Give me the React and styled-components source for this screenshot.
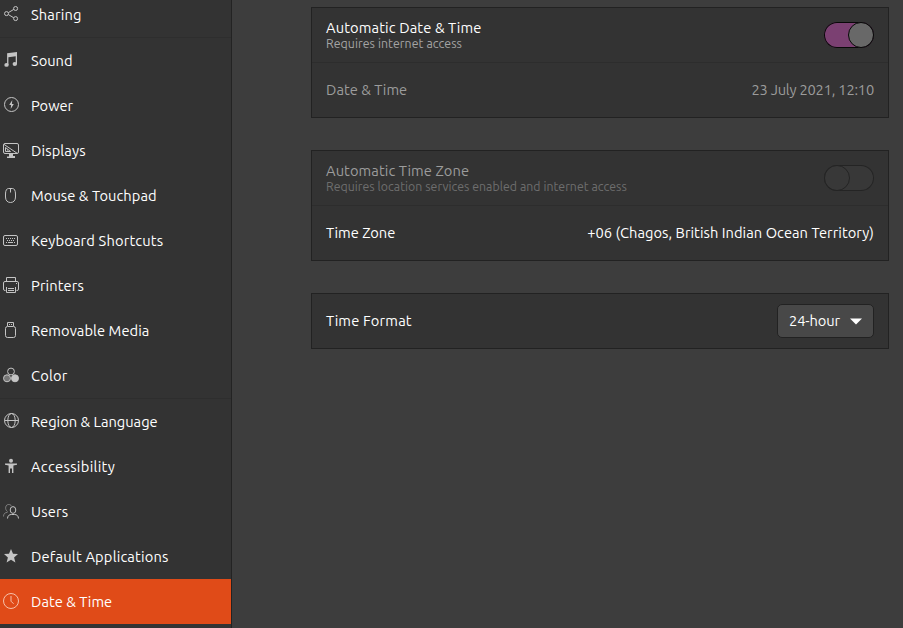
import React from "react";
import styled, { createGlobalStyle } from "styled-components";

const Global = createGlobalStyle`
  * { box-sizing: border-box; }
  body {
    margin: 0;
    background: #3d3d3d;
    overflow: hidden;
    font-family: Ubuntu, "Noto Sans", sans-serif;
    font-size: 14.667px;
    line-height: 16px;
    color: #fff;
  }
`;

const Window = styled.div`
  display: flex;
  width: 903px;
  height: 628px;
  overflow: hidden;
`;

const Sidebar = styled.nav`
  flex: 0 0 232px;
  display: flex;
  flex-direction: column;
  justify-content: flex-start;
  margin-top: -8px;
  background: #333;
  border-right: 1px solid #232323;
`;

const NavGroup = styled.div`
  display: flex;
  flex-direction: column;
  & + & { border-top: 1px solid #2e2e2e; }
`;

const NavItem = styled.div`
  display: flex;
  align-items: center;
  gap: 12px;
  height: 45px;
  padding-left: 3px;
  white-space: nowrap;
  background: ${(p) => (p.$active ? "#e04b18" : "transparent")};
  color: ${(p) => (p.$active ? "#f6c0aa" : "#c4c4c4")};
`;

const NavIcon = styled.svg`
  flex: none;
  width: 16px;
  height: 16px;
  margin-bottom: 1px;
  fill: none;
  stroke: currentColor;
  stroke-width: 1;
`;

const Label = styled.span`
  color: ${(p) => (p.$dim ? "#9c9c9c" : "#fff")};
  letter-spacing: ${(p) => p.$track || 0}px;
  white-space: nowrap;
`;

const Note = styled(Label)`
  font-size: 12.3px;
  color: ${(p) => (p.$dim ? "#6e6e6e" : "#a4a4a4")};
`;

const Content = styled.main`
  flex: 1;
  display: flex;
  flex-direction: column;
  gap: 32px;
  padding: 7px 14px 0 79px;
`;

const Card = styled.section`
  display: flex;
  flex-direction: column;
  background: #333;
  border: 1px solid #222;
`;

const Row = styled.div`
  display: flex;
  align-items: center;
  justify-content: space-between;
  height: 54px;
  padding: 0 14px;
  & + & { height: 55px; border-top: 1px solid #2d2d2d; }
`;

const Titles = styled.div`
  display: flex;
  flex-direction: column;
  padding-top: 1px;
`;

const Switch = styled.div`
  display: flex;
  justify-content: ${(p) => (p.$on ? "flex-end" : "flex-start")};
  width: 50px;
  height: 26px;
  border-radius: 13px;
  background: ${(p) => (p.$on ? "#7b4072" : "#383838")};
  box-shadow: inset 0 0 0 1px ${(p) => (p.$on ? "#080808" : "#242424")};
`;

const Knob = styled.div`
  width: 26px;
  height: 26px;
  border-radius: 50%;
  border: 1px solid ${(p) => (p.$on ? "#080808" : "#242424")};
  background: ${(p) => (p.$on ? "#686868" : "#383838")};
`;

const Select = styled.button`
  display: flex;
  align-items: center;
  justify-content: space-between;
  width: 97px;
  height: 34px;
  padding: 0 11px;
  border: 1px solid #222;
  border-radius: 5px;
  background: #484848;
  font: inherit;
`;

const Caret = styled.svg`
  width: 12px;
  height: 7px;
  fill: #fff;
`;

const icons = {
  sharing: (
    <>
      <circle cx="3.5" cy="7.6" r="2" />
      <circle cx="12.6" cy="2.5" r="2" />
      <circle cx="12.6" cy="12.6" r="2" />
      <path d="M5.4 6.6l5.4-3.2M5.4 8.6l5.4 3.2" />
    </>
  ),
  sound: (
    <g fill="currentColor" stroke="none">
      <path d="M4.1 1.2L14 0v12.2h-1.3V4.3L5.4 5.2v7.9H4.1z" />
      <ellipse cx="3.5" cy="12.9" rx="2.2" ry="1.9" />
      <ellipse cx="11.8" cy="12" rx="2.2" ry="1.9" />
    </g>
  ),
  power: (
    <>
      <circle cx="8.5" cy="7.5" r="7" />
      <path d="M9.3 3L6.2 8h1.9l-.4 4 3.1-5H8.9z" fill="currentColor" stroke="none" />
    </>
  ),
  displays: (
    <>
      <rect x=".5" y="1.5" width="15" height="10" rx="1.5" />
      <path d="M1 2.4l13 8.8M2.5 5.5v4h5zM4.5 7.5v1" />
      <path d="M6 12h4v2h2v2H4v-1.500h2z" fill="currentColor" stroke="none" />
    </>
  ),
  mouse: (
    <path d="M5.5 1.5h4c1.7 0 3 1.8 3 5.5v3c0 3.5-2 5.5-5 5.5s-5-2-5-5.5V7c0-3.7 1.3-5.5 3-5.5zM7.5 1.5v4" />
  ),
  keyboard: (
    <>
      <rect x=".5" y="3.5" width="14" height="10" rx="1.5" />
      <path d="M3 6.5h10M4 8.5h8" strokeDasharray="1 1" />
      <path d="M3 10.5h1M5 10.5h5M11 10.5h1" />
    </>
  ),
  printer: (
    <>
      <path d="M3.5 4V.5h9V4M2.5 13.5H2A1.5 1.5 0 0 1 .5 12V6A1.5 1.5 0 0 1 2 4.5h12A1.5 1.5 0 0 1 15.5 6v6a1.5 1.5 0 0 1-1.5 1.5h-.5" />
      <path d="M3.5 10v5.5h9V10M5 11.5h6M5 13.5h6M13 6.5h1" />
    </>
  ),
  removable: (
    <>
      <rect x="2.5" y="4.5" width="10" height="11" rx="2" />
      <path d="M4.5 4V.5h6V4M6 2.5h1M8 2.5h1" />
    </>
  ),
  color: (
    <>
      <circle cx="8" cy="4.5" r="3.4" />
      <circle cx="4" cy="11.3" r="3.5" fill="#777" />
      <circle cx="12" cy="11.3" r="3.5" fill="currentColor" />
    </>
  ),
  region: (
    <>
      <circle cx="8.5" cy="7.5" r="7" />
      <ellipse cx="8.5" cy="7.5" rx="3.7" ry="7" />
      <path d="M1.5 7.5h14" />
    </>
  ),
  accessibility: (
    <g fill="currentColor" stroke="none">
      <circle cx="8" cy="2.8" r="2" />
      <path d="M2 5.5h12v1.2l-3.6.9V15H9v-4.4H7V15H5.6V7.6L2 6.7z" />
    </g>
  ),
  users: (
    <>
      <g opacity=".5">
        <path d="M4.5 8.5C3 7.5 2.5 6 2.7 4.2 3 2.3 4.3 1.5 5.7 1.5c1.2 0 2.3.5 2.8 1.6M.5 13.5c0-2.5 1.3-4 4-4.2" />
      </g>
      <ellipse cx="10" cy="7" rx="2.8" ry="3.4" />
      <path d="M4.5 15.5c.2-2.7 1.6-4 4-4h3c2.4 0 3.8 1.3 4 4" />
    </>
  ),
  star: (
    <path
      d="M8 1l2 4.8 5 .3-3.9 3.3 1.3 5.1L8 11.7l-4.4 2.8 1.3-5.1L1 6.1l5-.3z"
      fill="currentColor"
      stroke="none"
    />
  ),
  clock: (
    <>
      <circle cx="8" cy="8" r="7.5" />
      <path d="M8 3v5.2l2.6 2.6" />
    </>
  ),
};

const groups = [
  [["sharing", "Sharing", 0.15]],
  [
    ["sound", "Sound", 0],
    ["power", "Power", 0],
    ["displays", "Displays", 0.12],
    ["mouse", "Mouse & Touchpad", 0.06],
    ["keyboard", "Keyboard Shortcuts", 0.17],
    ["printer", "Printers", 0.12],
    ["removable", "Removable Media", 0.07],
    ["color", "Color", 0.2],
  ],
  [
    ["region", "Region & Language", 0],
    ["accessibility", "Accessibility", 0.33],
    ["users", "Users", 0.2],
    ["star", "Default Applications", 0.19],
    ["clock", "Date & Time", 0.04],
  ],
];

const Toggle = ({ on }) => (
  <Switch $on={on}>
    <Knob $on={on} />
  </Switch>
);

export default function App() {
  return (
    <Window>
      <Global />
      <Sidebar>
        {groups.map((items) => (
          <NavGroup key={items[0][0]}>
            {items.map(([icon, text, track]) => (
              <NavItem key={icon} $active={icon === "clock"}>
                <NavIcon viewBox="0 0 16 16">{icons[icon]}</NavIcon>
                <Label $track={track}>{text}</Label>
              </NavItem>
            ))}
          </NavGroup>
        ))}
      </Sidebar>
      <Content>
        <Card>
          <Row>
            <Titles>
              <Label $track={0.13}>Automatic Date &amp; Time</Label>
              <Note $track={0.08}>Requires internet access</Note>
            </Titles>
            <Toggle on />
          </Row>
          <Row>
            <Label $dim $track={0.04}>Date &amp; Time</Label>
            <Label $dim $track={-0.2}>23 July 2021, 12:10</Label>
          </Row>
        </Card>
        <Card>
          <Row>
            <Titles>
              <Label $dim $track={0.1}>Automatic Time Zone</Label>
              <Note $dim $track={0.04}>Requires location services enabled and internet access</Note>
            </Titles>
            <Toggle on={false} />
          </Row>
          <Row>
            <Label>Time Zone</Label>
            <Label $track={0.05}>+06 (Chagos, British Indian Ocean Territory)</Label>
          </Row>
        </Card>
        <Card>
          <Row>
            <Label $track={0.17}>Time Format</Label>
            <Select>
              <Label $track={-0.08}>24-hour</Label>
              <Caret viewBox="0 0 12 7">
                <path d="M0 .5h12L6 6.5z" />
              </Caret>
            </Select>
          </Row>
        </Card>
      </Content>
    </Window>
  );
}
